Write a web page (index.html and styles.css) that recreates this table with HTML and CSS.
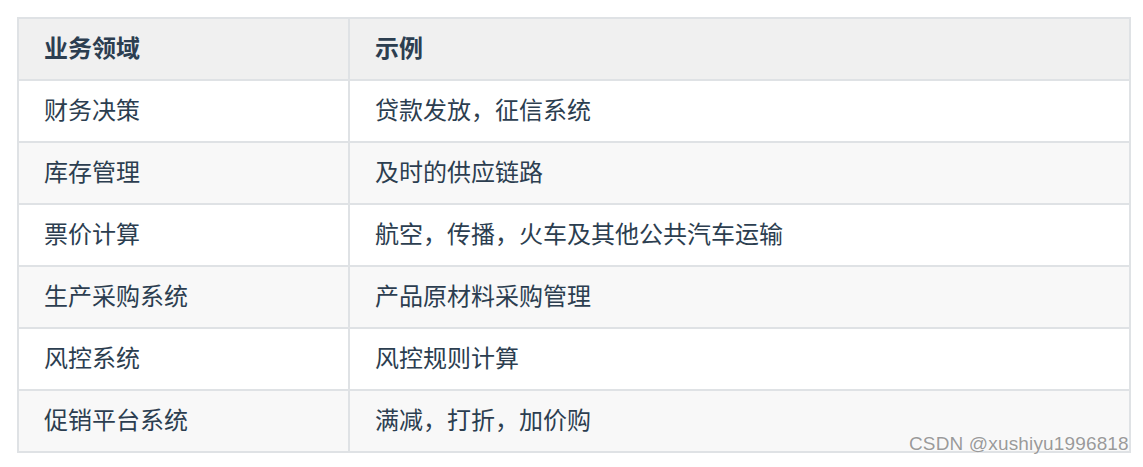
FILE: index.html
```html
<!DOCTYPE html>
<html lang="zh">
<head>
<meta charset="utf-8">
<link rel="stylesheet" href="styles.css">
</head>
<body>
<div class="wrap">
<table class="tbl">
  <thead>
    <tr><th class="c1">业务领域</th><th>示例</th></tr>
  </thead>
  <tbody>
    <tr><td>财务决策</td><td>贷款发放，征信系统</td></tr>
    <tr><td>库存管理</td><td>及时的供应链路</td></tr>
    <tr><td>票价计算</td><td>航空，传播，火车及其他公共汽车运输</td></tr>
    <tr><td>生产采购系统</td><td>产品原材料采购管理</td></tr>
    <tr><td>风控系统</td><td>风控规则计算</td></tr>
    <tr><td>促销平台系统</td><td>满减，打折，加价购</td></tr>
  </tbody>
</table>
<span class="mark">CSDN @xushiyu1996818</span>
</div>
</body>
</html>
```

FILE: styles.css
```css
html, body {
  margin: 0;
  padding: 0;
  background: #ffffff;
}
.wrap {
  position: relative;
  padding: 17px 0 0 17px;
  height: 450px;
}
.tbl {
  border-collapse: collapse;
  width: 1114px;
  font-family: "Noto Sans CJK SC", "Noto Sans", sans-serif;
  font-size: 24px;
  color: #2c3e50;
  table-layout: fixed;
}
.tbl th, .tbl td {
  box-sizing: border-box;
  border: 2px solid #dfe2e5;
  height: 62px;
  padding: 0 0 4px 25px;
  text-align: left;
  vertical-align: middle;
  line-height: 30px;
}
.tbl th {
  background: #f0f0f0;
  font-weight: 700;
}
.tbl .c1 {
  width: 331px;
}
.tbl tbody tr:nth-child(even) td {
  background: #f8f8f8;
}
.tbl tbody tr:nth-child(odd) td {
  background: #ffffff;
}
.mark {
  position: absolute;
  left: 909px;
  top: 433px;
  font-family: "Liberation Sans", Arial, sans-serif;
  font-size: 19px;
  letter-spacing: 0.15px;
  color: #9a9a9a;
  text-shadow: 0 0 2px #fff, 0 0 1px #fff;
}
```
